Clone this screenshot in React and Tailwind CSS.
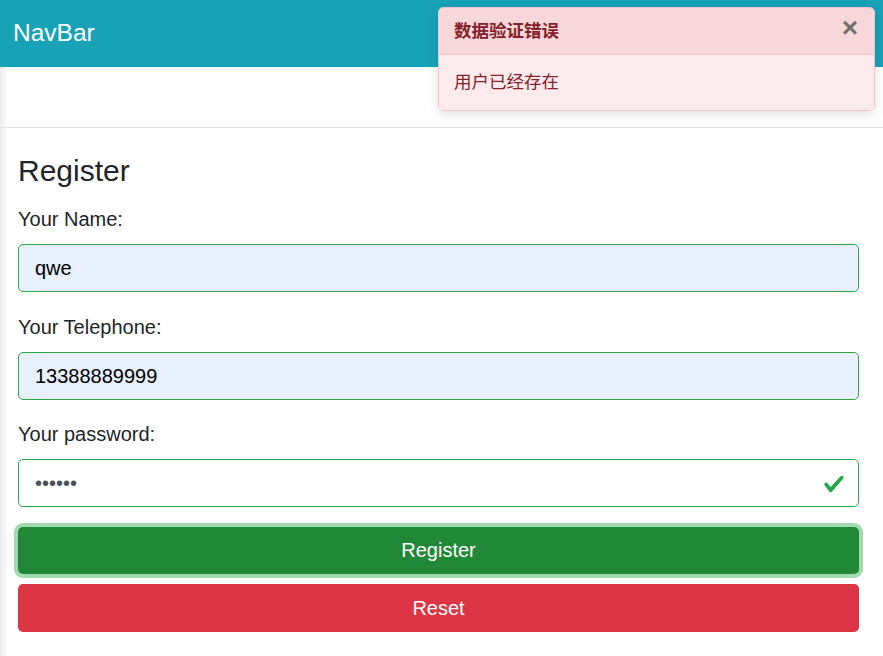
import React from 'react';

const font = { fontFamily: '"Liberation Sans", "Noto Sans CJK SC", Arial, sans-serif' };

function CheckIcon() {
  return (
    <svg viewBox="0 0 8 8" className="w-[22px] h-[22px] shrink-0 mt-[1px]" fill="#28a745">
      <path d="M2.3 6.73L.6 4.53c-.4-1.04.46-1.4 1.1-.8l1.1 1.4 3.4-3.8c.6-.63 1.6-.27 1.2.7l-4 4.6c-.43.5-.8.4-1.1.1z" />
    </svg>
  );
}

function Field({ label, value, type = 'text', autofill = true, valid = false }) {
  return (
    <div className="mb-[19.5px]">
      <label className="block text-[20px] leading-[30px] text-[#212529] mb-[10px]">{label}</label>
      <div
        className={`flex items-center h-[48px] rounded-[5px] border border-[#28a745] pl-[16px] pr-[13px] ${autofill ? 'bg-[#e8f0fe]' : 'bg-white'}`}
      >
        <input
          type={type}
          value={value}
          readOnly
          className={`flex-1 min-w-0 bg-transparent outline-none text-[20px] ${autofill ? 'text-black' : 'text-[#495057]'}`}
          style={font}
        />
        {valid && <CheckIcon />}
      </div>
    </div>
  );
}

export default function App() {
  return (
    <div className="relative w-[883px] h-[656px] overflow-hidden bg-white" style={font}>
      <nav className="h-[67px] bg-[#17a2b8] flex items-center px-[13px]">
        <span className="text-white text-[24.5px]">NavBar</span>
      </nav>

      <div className="bg-[linear-gradient(to_right,#ebebeb,#ffffff_9px)] h-[589px]">
        <div className="h-[61px] border-b border-[#dee2e6]" />

        <div className="pl-[18px] pr-[24px] pt-[25px]">
          <h4 className="text-[30px] leading-[36px] text-[#212529] mb-[15px]">Register</h4>

          <Field label="Your Name:" value="qwe" />
          <Field label="Your Telephone:" value="13388889999" />
          <Field label="Your password:" value="123456" type="password" autofill={false} valid />

          <div className="flex flex-col gap-[10px] mt-[0.5px]">
            <button className="h-[47px] rounded-[5px] bg-[#218838] text-white text-[20px] shadow-[0_0_0_4px_#a3d9b0]">
              Register
            </button>
            <button className="h-[48px] rounded-[5px] bg-[#dc3545] text-white text-[20px]">
              Reset
            </button>
          </div>
        </div>
      </div>

      {/* toast */}
      <div className="absolute left-[438px] top-[7px] w-[437px] rounded-[5px] border border-[#f5c2c7] overflow-hidden shadow-[0_4px_12px_rgba(0,0,0,0.12)]">
        <div className="h-[47px] bg-[#f8d7da] border-b border-[#f5c2c7] flex items-center justify-between pl-[15px] pr-[16px]">
          <strong className="text-[17.5px] text-[#842029] font-bold">数据验证错误</strong>
          <span className="text-[#6f6f6f] text-[28px] font-bold leading-none -mt-[6px]">×</span>
        </div>
        <div className="h-[55px] bg-[#fcebec] flex items-center pl-[15px]">
          <span className="text-[17.5px] text-[#842029]">用户已经存在</span>
        </div>
      </div>
    </div>
  );
}
